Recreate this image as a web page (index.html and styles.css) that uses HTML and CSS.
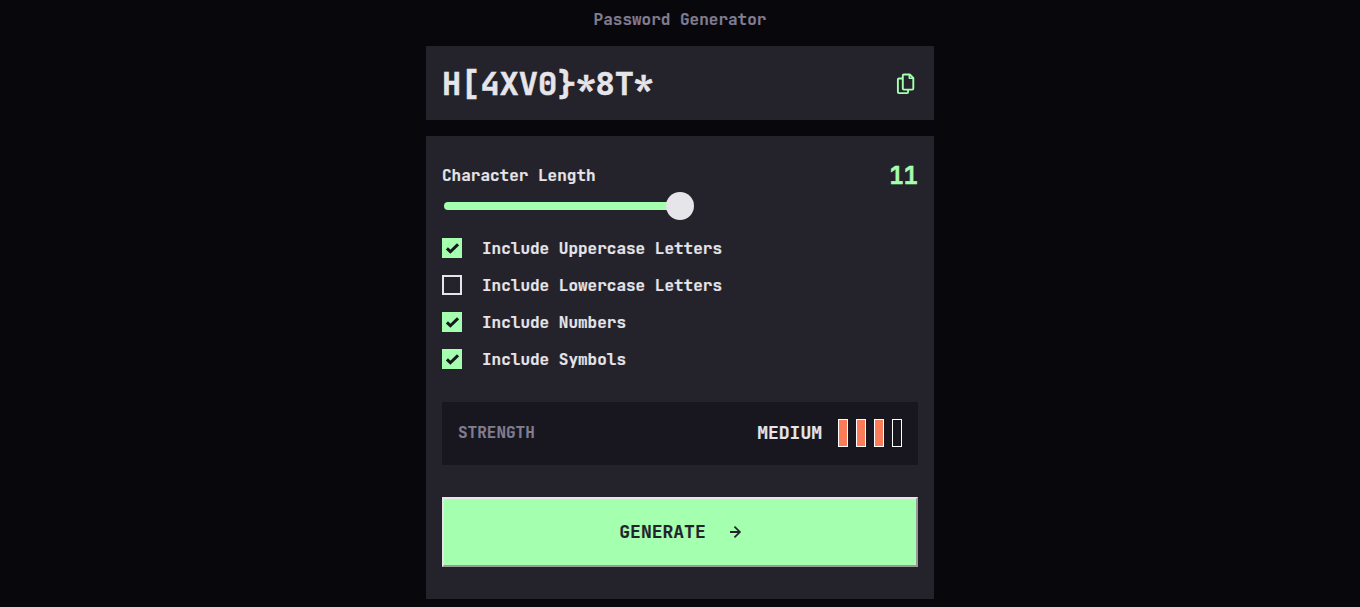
FILE: index.html
```html
<!DOCTYPE html>
<html lang="en">
<head>
<meta charset="utf-8">
<title>Password Generator</title>
<link rel="stylesheet" href="styles.css">
</head>
<body>
<main class="app">
  <h1 class="title">Password Generator</h1>
  <section class="output">
    <span class="password">H[4XV0}*8T*</span>
    <svg class="copy" width="20" height="22" viewBox="0 0 20 22" fill="none" stroke="currentColor" stroke-width="1.900" stroke-linejoin="round">
      <path d="M6 5.500H3Q1.900 5.500 1.900 6.600V19Q1.900 20.100 3 20.100H11Q12.100 20.100 12.100 19V17"/>
      <path d="M7.900 1.500H13.800L17.300 5V15.500Q17.300 16.600 16.200 16.600H7.900Q6.800 16.600 6.800 15.500V2.600Q6.800 1.500 7.900 1.500Z"/>
      <path d="M13.300 1.500V5.300H17.300" stroke-width="1.500"/>
    </svg>
  </section>
  <section class="panel">
    <div class="length-row"><span>Character Length</span><span class="count">11</span></div>
    <div class="slider"><span class="track"></span><span class="thumb"></span></div>
    <ul class="options">
      <li><span class="box checked"><svg width="14" height="12" viewBox="0 0 14 12"><path d="M1.900 6.300 5.400 9.700 13 2.300"/></svg></span><span class="option-text">Include Uppercase Letters</span></li>
      <li><span class="box"></span><span class="option-text">Include Lowercase Letters</span></li>
      <li><span class="box checked"><svg width="14" height="12" viewBox="0 0 14 12"><path d="M1.900 6.300 5.400 9.700 13 2.300"/></svg></span><span class="option-text">Include Numbers</span></li>
      <li><span class="box checked"><svg width="14" height="12" viewBox="0 0 14 12"><path d="M1.900 6.300 5.400 9.700 13 2.300"/></svg></span><span class="option-text">Include Symbols</span></li>
    </ul>
    <div class="strength">
      <span class="strength-label">STRENGTH</span>
      <span class="level">MEDIUM</span>
      <span class="bars"><i class="on"></i><i class="on"></i><i class="on"></i><i></i></span>
    </div>
    <button class="generate"><span>GENERATE</span><svg width="12" height="12" viewBox="0 0 12 12"><path fill="currentColor" d="m5.106 12 6-6-6-6-1.265 1.265 3.841 3.840H.001v1.790h7.681l-3.841 3.840z"/></svg></button>
  </section>
</main>
</body>
</html>
```

FILE: styles.css
```css
* { box-sizing: border-box; }
body {
  margin: 0;
  height: 607px;
  overflow: hidden;
  background: #08070b;
  color: #e6e5ea;
  font: 700 16px/20px "JetBrains Mono", "DejaVu Sans Mono", monospace;
  -webkit-text-stroke: 0.2px currentColor;
}
.app { width: 508px; margin: 0 auto; padding-top: 10px; }
.title {
  margin: 0 0 16px;
  font-size: 16px;
  line-height: 20px;
  text-align: center;
  color: #817d92;
}
.output {
  height: 74px;
  margin-bottom: 16px;
  padding: 2px 18px 0 16px;
  display: flex;
  align-items: center;
  justify-content: space-between;
  background: #24232c;
}
.password { font-size: 32px; line-height: 40px; -webkit-text-stroke-width: 0.6px; }
.copy { color: #a4ffaf; }
.panel { height: 463px; padding: 24px 16px 0; background: #24232c; }
.length-row {
  height: 32px;
  display: flex;
  justify-content: space-between;
  align-items: center;
}
.count { font-size: 24px; color: #a4ffaf; -webkit-text-stroke-width: 0.4px; }
.slider { height: 28px; padding-left: 2px; display: flex; align-items: center; }
.track { width: 230px; height: 8px; border-radius: 4px 0 0 4px; background: #a4ffaf; }
.thumb { width: 28px; height: 28px; margin-left: -8px; border-radius: 50%; background: #e6e5ea; }
.options {
  list-style: none;
  margin: 18px 0 33px;
  padding: 0;
  display: grid;
  gap: 17px;
}
.options li { height: 20px; display: flex; align-items: center; gap: 20px; }
.option-text { padding-top: 2px; }
.box {
  width: 20px;
  height: 20px;
  display: flex;
  align-items: center;
  justify-content: center;
  border: 2px solid #e6e5ea;
}
.checked { border: 0; background: #a4ffaf; }
.checked path { fill: none; stroke: #18171f; stroke-width: 3; }
.strength {
  height: 63px;
  padding: 0 16px 1px;
  display: flex;
  align-items: center;
  background: #18171f;
}
.strength-label { color: #817d92; }
.level { margin-left: auto; font-size: 18px; }
.bars { display: flex; gap: 8px; margin-left: 16px; }
.bars i { width: 10px; height: 28px; border: 1px solid #fff; }
.bars .on { background: #fb7c58; }
.generate {
  width: 100%;
  height: 70px;
  margin-top: 32px;
  padding: 0 0 0 1px;
  display: flex;
  align-items: center;
  justify-content: center;
  gap: 24px;
  border: 2px solid;
  border-color: #e6e5ea #999 #999 #e6e5ea;
  background: #a4ffaf;
  color: #24232c;
  font: inherit;
  font-size: 18px;
}
```
